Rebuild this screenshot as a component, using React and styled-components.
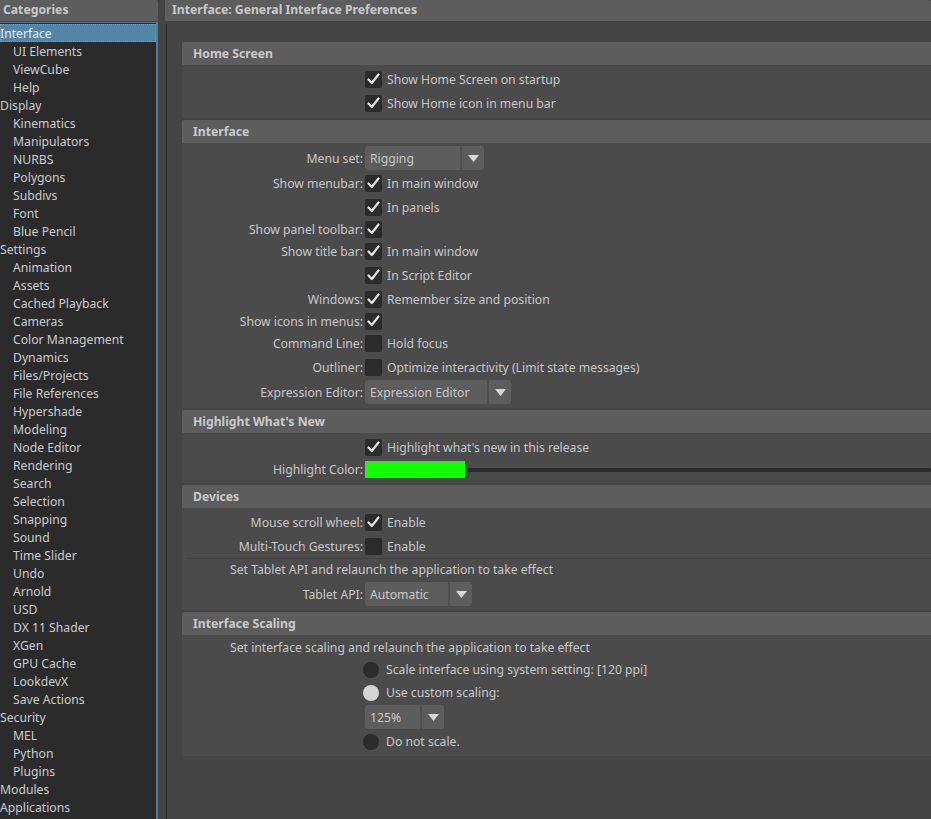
import React from "react";
import styled, { createGlobalStyle } from "styled-components";

const GlobalStyle = createGlobalStyle`
  html, body {
    margin: 0;
    padding: 0;
    background: #444444;
    overflow: hidden;
  }
  body {
    font-family: "Noto Sans", "Open Sans", sans-serif;
    font-size: 12.2px;
    color: #c8c8c8;
  }
`;

const categories = [
  ["Interface", 0],
  ["UI Elements", 1],
  ["ViewCube", 1],
  ["Help", 1],
  ["Display", 0],
  ["Kinematics", 1],
  ["Manipulators", 1],
  ["NURBS", 1],
  ["Polygons", 1],
  ["Subdivs", 1],
  ["Font", 1],
  ["Blue Pencil", 1],
  ["Settings", 0],
  ["Animation", 1],
  ["Assets", 1],
  ["Cached Playback", 1],
  ["Cameras", 1],
  ["Color Management", 1],
  ["Dynamics", 1],
  ["Files/Projects", 1],
  ["File References", 1],
  ["Hypershade", 1],
  ["Modeling", 1],
  ["Node Editor", 1],
  ["Rendering", 1],
  ["Search", 1],
  ["Selection", 1],
  ["Snapping", 1],
  ["Sound", 1],
  ["Time Slider", 1],
  ["Undo", 1],
  ["Arnold", 1],
  ["USD", 1],
  ["DX 11 Shader", 1],
  ["XGen", 1],
  ["GPU Cache", 1],
  ["LookdevX", 1],
  ["Save Actions", 1],
  ["Security", 0],
  ["MEL", 1],
  ["Python", 1],
  ["Plugins", 1],
  ["Modules", 0],
  ["Applications", 0],
];

const Page = styled.div`
  display: flex;
  height: 819px;
  width: 931px;
  overflow: hidden;
`;

const Sidebar = styled.div`
  width: 158px;
  flex: none;
  display: flex;
  flex-direction: column;
`;

const PanelTitle = styled.div`
  height: 21px;
  line-height: 19px;
  background: #5d5d5d;
  font-weight: bold;
  padding-left: ${(p) => p.$indent || 3}px;
  color: #c9c9c9;
  border-radius: 0 2px 0 0;
  flex: none;
`;

const CategoryList = styled.div`
  flex: 1;
  margin-top: 1px;
  background: #2b2b2b;
  border-top: 1px solid #52799a;
  border-right: 2px solid #52799a;
  padding-top: 1px;
`;

const CategoryItem = styled.div`
  height: 18px;
  line-height: 19px;
  padding-left: ${(p) => (p.$child ? 13 : 0)}px;
  color: ${(p) => (p.$selected ? "#e8eef2" : "#c8ccd0")};
  background: ${(p) => (p.$selected ? "#5285a6" : "transparent")};
  outline: ${(p) => (p.$selected ? "1px dotted #c08a4a" : "none")};
  outline-offset: -1px;
  white-space: nowrap;
`;

const Main = styled.div`
  flex: 1;
  margin-left: 7px;
  display: flex;
  flex-direction: column;
  min-width: 0;
`;

const MainBody = styled.div`
  flex: 1;
  margin-top: 3px;
  margin-left: 1px;
  border-left: 1px solid #2b2b2b;
  padding: 18px 0 0 15px;
  display: flex;
  flex-direction: column;
  gap: 2px;
`;

const Section = styled.div`
  display: flex;
  flex-direction: column;
`;

const SectionHeader = styled.div`
  height: 23px;
  line-height: 23px;
  background: #5d5d5d;
  border-radius: 2px 0 0 0;
  padding-left: 11px;
  font-weight: bold;
  color: #cacaca;
`;

const SectionBody = styled.div`
  background: #4b4b4b;
  padding: 2px 0 3px 0;
  display: flex;
  flex-direction: column;
`;

const Row = styled.div`
  display: grid;
  grid-template-columns: 181px 1fr;
  align-items: center;
  height: ${(p) => p.$h || 24}px;
`;

const Label = styled.div`
  text-align: right;
  white-space: nowrap;
`;

const Control = styled.div`
  display: flex;
  align-items: center;
  gap: 5px;
  padding-left: ${(p) => (p.$pad === undefined ? 2 : p.$pad)}px;
  white-space: nowrap;
`;

const Box = styled.div`
  width: 17px;
  height: 17px;
  background: #2b2b2b;
  border-radius: 2px;
  display: flex;
  align-items: center;
  justify-content: center;
  flex: none;
`;

const Radio = styled.div`
  width: 16px;
  height: 16px;
  border-radius: 50%;
  background: ${(p) => (p.$on ? "#d4d4d4" : "#2b2b2b")};
  flex: none;
  margin-right: 2px;
`;

const Dropdown = styled.div`
  display: flex;
  height: 24px;
  width: ${(p) => p.$w}px;
  margin-left: 2px;
  border-radius: 3px;
  overflow: hidden;
  background: #5d5d5d;
`;

const DropText = styled.div`
  flex: 1;
  padding-left: 5px;
  line-height: 25px;
  border-right: 2px solid #4f4f4f;
`;

const DropArrow = styled.div`
  width: 22px;
  display: flex;
  align-items: center;
  justify-content: center;
`;

const ColorSwatch = styled.div`
  width: 100px;
  height: 17px;
  background: #11ff00;
  flex: none;
`;

const Track = styled.div`
  flex: 1;
  height: 4px;
  background: #2b2b2b;
  border-radius: 2px;
  margin-left: -3px;
`;

const Note = styled.div`
  height: ${(p) => p.$h || 23}px;
  line-height: ${(p) => p.$h || 23}px;
  padding-left: 48px;
  white-space: nowrap;
`;

const Divider = styled.div`
  height: 1px;
  background: #424242;
  margin-left: 4px;
`;

const Check = () => (
  <svg width="13" height="12" viewBox="0 0 13 12">
    <path
      d="M1.5 6.5 L4.8 10 L11.5 1.5"
      fill="none"
      stroke="#e6e6e6"
      strokeWidth="2.2"
      strokeLinecap="round"
      strokeLinejoin="round"
    />
  </svg>
);

const CheckBox = ({ checked }) => <Box>{checked && <Check />}</Box>;

const Select = ({ value, width }) => (
  <Dropdown $w={width}>
    <DropText>{value}</DropText>
    <DropArrow>
      <svg width="11" height="7" viewBox="0 0 11 7">
        <path d="M0 0 H11 L5.5 7 Z" fill="#d8d8d8" />
      </svg>
    </DropArrow>
  </Dropdown>
);

const CheckRow = ({ label, text, checked, h }) => (
  <Row $h={h || (text ? 24 : 20)}>
    <Label>{label}</Label>
    <Control>
      <CheckBox checked={checked} />
      {text && <span>{text}</span>}
    </Control>
  </Row>
);

const SelectRow = ({ label, value, width }) => (
  <Row $h={26}>
    <Label>{label}</Label>
    <Control $pad={0}>
      <Select value={value} width={width} />
    </Control>
  </Row>
);

const RadioRow = ({ text, on }) => (
  <Row $h={23}>
    <Label />
    <Control $pad={0}>
      <Radio $on={on} />
      <span>{text}</span>
    </Control>
  </Row>
);

export default function App() {
  return (
    <>
      <GlobalStyle />
      <Page>
        <Sidebar>
          <PanelTitle>Categories</PanelTitle>
          <CategoryList>
            {categories.map(([name, child], i) => (
              <CategoryItem key={name} $child={child} $selected={i === 0}>
                {name}
              </CategoryItem>
            ))}
          </CategoryList>
        </Sidebar>

        <Main>
          <PanelTitle $indent={7}>Interface: General Interface Preferences</PanelTitle>
          <MainBody>
            <Section>
              <SectionHeader>Home Screen</SectionHeader>
              <SectionBody>
                <CheckRow checked text="Show Home Screen on startup" />
                <CheckRow checked text="Show Home icon in menu bar" />
              </SectionBody>
            </Section>

            <Section>
              <SectionHeader>Interface</SectionHeader>
              <SectionBody>
                <SelectRow label="Menu set:" value="Rigging" width={119} />
                <CheckRow label="Show menubar:" checked text="In main window" />
                <CheckRow checked text="In panels" />
                <CheckRow label="Show panel toolbar:" checked />
                <CheckRow label="Show title bar:" checked text="In main window" />
                <CheckRow checked text="In Script Editor" />
                <CheckRow label="Windows:" checked text="Remember size and position" />
                <CheckRow label="Show icons in menus:" checked />
                <CheckRow label="Command Line:" text="Hold focus" />
                <CheckRow label="Outliner:" text="Optimize interactivity (Limit state messages)" />
                <SelectRow label="Expression Editor:" value="Expression Editor" width={146} />
              </SectionBody>
            </Section>

            <Section>
              <SectionHeader>Highlight What's New</SectionHeader>
              <SectionBody>
                <CheckRow checked text="Highlight what's new in this release" />
                <Row $h={21}>
                  <Label>Highlight Color:</Label>
                  <Control $pad={2}>
                    <ColorSwatch />
                    <Track />
                  </Control>
                </Row>
              </SectionBody>
            </Section>

            <Section>
              <SectionHeader>Devices</SectionHeader>
              <SectionBody>
                <CheckRow label="Mouse scroll wheel:" checked text="Enable" />
                <CheckRow label="Multi-Touch Gestures:" text="Enable" />
                <Divider />
                <Note $h={22}>Set Tablet API and relaunch the application to take effect</Note>
                <SelectRow label="Tablet API:" value="Automatic" width={107} />
              </SectionBody>
            </Section>

            <Section>
              <SectionHeader>Interface Scaling</SectionHeader>
              <SectionBody>
                <Note $h={21}>Set interface scaling and relaunch the application to take effect</Note>
                <RadioRow text="Scale interface using system setting: [120 ppi]" />
                <RadioRow on text="Use custom scaling:" />
                <SelectRow value="125%" width={79} />
                <RadioRow text="Do not scale." />
              </SectionBody>
            </Section>
          </MainBody>
        </Main>
      </Page>
    </>
  );
}
